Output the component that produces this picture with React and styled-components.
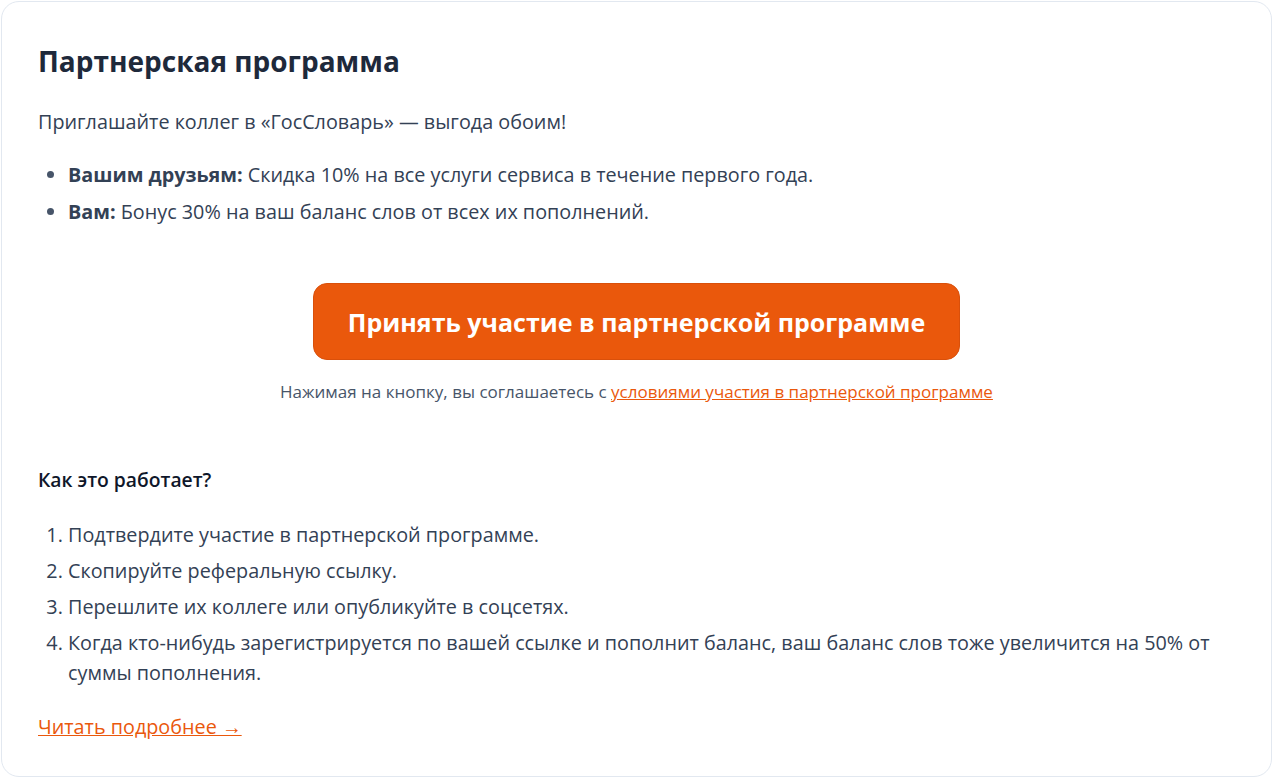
import styled, { createGlobalStyle } from 'styled-components';

const GlobalStyle = createGlobalStyle`
	html, body {
		margin: 0;
		padding: 0;
		background: #ffffff;
		font-family: "Open Sans", "Noto Sans", sans-serif;
	}
`;

const friends = [
	{ label: 'Вашим друзьям:', text: 'Скидка 10% на все услуги сервиса в течение первого года.' },
	{ label: 'Вам:', text: 'Бонус 30% на ваш баланс слов от всех их пополнений.' },
];

const steps = [
	'Подтвердите участие в партнерской программе.',
	'Скопируйте реферальную ссылку.',
	'Перешлите их коллеге или опубликуйте в соцсетях.',
	'Когда кто-нибудь зарегистрируется по вашей ссылке и пополнит баланс, ваш баланс слов тоже увеличится на 50% от суммы пополнения.',
];

const App = () => {
	return (
		<Page>
			<GlobalStyle />
			<Card>
				<Title>Партнерская программа</Title>
				<Lead>Приглашайте коллег в «ГосСловарь» — выгода обоим!</Lead>
				<BulletList>
					{friends.map((item) => (
						<Item key={item.label}>
							<Strong>{item.label}</Strong> {item.text}
						</Item>
					))}
				</BulletList>
				<Action>
					<JoinButton>Принять участие в партнерской программе</JoinButton>
					<Note>
						Нажимая на кнопку, вы соглашаетесь с{' '}
						<Link href="#">условиями участия в партнерской программе</Link>
					</Note>
				</Action>
				<Subtitle>Как это работает?</Subtitle>
				<StepList>
					{steps.map((step) => (
						<Item key={step}>{step}</Item>
					))}
				</StepList>
				<MoreLink href="#">Читать подробнее →</MoreLink>
			</Card>
		</Page>
	);
};

export default App;

/* Styles */
const Page = styled.div`
	padding: 1px;
	box-sizing: border-box;
	min-height: 100vh;
`;

const Card = styled.section`
	box-sizing: border-box;
	width: 1271px;
	min-height: 775px;
	border: 1px solid #e2e8f0;
	border-radius: 18px;
	background: #ffffff;
	padding: 43px 36px 34px;
	display: flex;
	flex-direction: column;
	align-items: flex-start;
	color: #334155;
`;

const Title = styled.h1`
	margin: 0;
	font-size: 28px;
	line-height: 32px;
	font-weight: 700;
	color: #1e293b;
`;

const Lead = styled.p`
	margin: 30px 0 0;
	font-size: 19.8px;
	line-height: 30px;
	color: #334155;
`;

const BulletList = styled.ul`
	margin: 23px 0 0;
	padding-left: 30px;
	display: flex;
	flex-direction: column;
	gap: 7px;

	li::marker {
		color: #475569;
	}
`;

const StepList = styled.ol`
	margin: 26px 0 0;
	padding-left: 30px;
	display: flex;
	flex-direction: column;
	gap: 6px;
	width: 100%;
	box-sizing: border-box;
`;

const Item = styled.li`
	font-size: 19.8px;
	line-height: 30px;
	color: #334155;
`;

const Strong = styled.strong`
	font-weight: 700;
	color: #334155;
`;

const Action = styled.div`
	align-self: stretch;
	margin-top: 56px;
	display: flex;
	flex-direction: column;
	align-items: center;
	gap: 20px;
`;

const JoinButton = styled.button`
	height: 77px;
	padding: 0 34px;
	border: 1px solid #d9500b;
	border-radius: 14px;
	background: #ea580c;
	color: #ffffff;
	font-family: inherit;
	font-size: 25px;
	font-weight: 700;
	cursor: pointer;
`;

const Note = styled.p`
	margin: 0;
	font-size: 17px;
	line-height: 24px;
	color: #475569;
	text-align: center;
`;

const Link = styled.a`
	color: #ea580c;
	text-decoration: underline;
`;

const Subtitle = styled.h2`
	margin: 62px 0 0;
	font-size: 19.3px;
	line-height: 28px;
	font-weight: 600;
	color: #0f172a;
`;

const MoreLink = styled.a`
	margin-top: 24px;
	font-size: 19.8px;
	line-height: 30px;
	color: #ea580c;
	text-decoration: underline;
`;
